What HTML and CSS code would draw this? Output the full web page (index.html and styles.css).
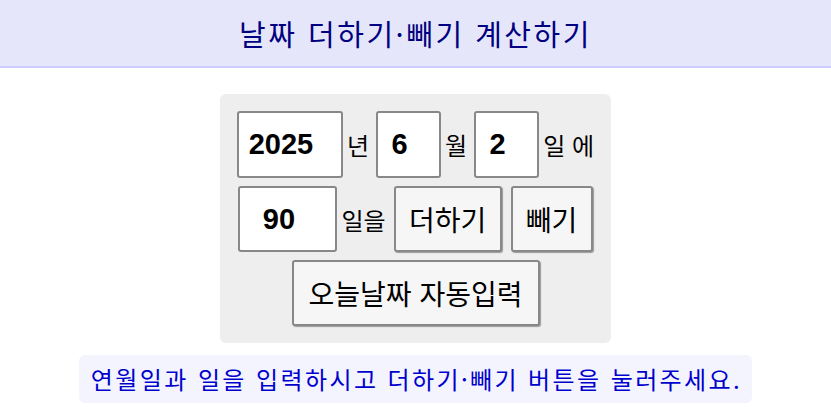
FILE: index.html
```html
<!DOCTYPE html>
<html lang="ko">
  <head>
    <meta charset="UTF-8" />
    <meta name="viewport" content="width=device-width, initial-scale=1.0" />
    <title>날짜 더하기·빼기 계산하기</title>
    <link rel="stylesheet" href="styles.css">
  </head>
  <body>
    <div class="header">날짜 더하기·빼기 계산하기</div>

    <div class="panel">
      <div class="row">
        <input class="num year" id="year" value="2025" />
        <span class="unit">년</span>
        <input class="num small" id="month" value="6" />
        <span class="unit">월</span>
        <input class="num small" id="day" value="2" />
        <span class="unit">일 에</span>
      </div>
      <div class="row">
        <input class="num days" id="days" value="90" />
        <span class="unit">일을</span>
        <button class="btn add" onclick="calc(1)">더하기</button>
        <button class="btn sub" onclick="calc(-1)">빼기</button>
      </div>
      <div class="row">
        <button class="btn today" onclick="setToday()">오늘날짜 자동입력</button>
      </div>
    </div>

    <div class="result" id="result">연월일과 일을 입력하시고 더하기·빼기 버튼을 눌러주세요.</div>

    <script>
      function setToday() {
        const d = new Date();
        document.getElementById("year").value = d.getFullYear();
        document.getElementById("month").value = d.getMonth() + 1;
        document.getElementById("day").value = d.getDate();
      }

      function calc(sign) {
        const y = parseInt(document.getElementById("year").value);
        const m = parseInt(document.getElementById("month").value);
        const d = parseInt(document.getElementById("day").value);
        const n = parseInt(document.getElementById("days").value);
        const result = document.getElementById("result");
        if (isNaN(y) || isNaN(m) || isNaN(d) || isNaN(n)) {
          result.innerText = "숫자를 바르게 입력해 주세요.";
          return;
        }
        const date = new Date(y, m - 1, d);
        date.setDate(date.getDate() + sign * n);
        result.innerText =
          date.getFullYear() + "년 " + (date.getMonth() + 1) + "월 " + date.getDate() + "일 입니다.";
      }
    </script>
  </body>
</html>
```

FILE: styles.css
```css
body {
  margin: 0;
  font-family: "Noto Sans CJK KR", "Liberation Sans", sans-serif;
  background: #fff;
}
.header {
  height: 66px;
  line-height: 66px;
  text-align: center;
  font-size: 29px;
  letter-spacing: 2.5px;
  color: #000080;
  background: #e6e6fa;
  border-bottom: 2px solid #ccccff;
}
.panel {
  width: 357px;
  margin: 26px auto 0;
  padding: 17px;
  background: #eeeeee;
  border-radius: 6px;
  display: flex;
  flex-direction: column;
  gap: 8px;
}
.row {
  display: flex;
  justify-content: center;
  align-items: center;
  gap: 4px;
}
.row > * {
  flex-shrink: 0;
}
.unit {
  font-size: 24px;
  white-space: nowrap;
  color: #000;
}
.num {
  box-sizing: border-box;
  height: 67px;
  padding: 0 18px 0 0;
  font-family: "Liberation Sans", sans-serif;
  font-size: 29px;
  font-weight: bold;
  text-align: center;
  color: #000;
  background: #fff;
  border: 2px solid #888;
  border-radius: 3px;
}
.year {
  width: 106px;
}
.small {
  width: 65px;
  margin-left: 3px;
}
.days {
  width: 99px;
  height: 66px;
}
.btn {
  box-sizing: border-box;
  height: 66px;
  padding: 0;
  font-family: "Noto Sans CJK KR", "Liberation Sans", sans-serif;
  font-size: 28px;
  white-space: nowrap;
  color: #000;
  background: #f6f6f6;
  border: 2px solid #888;
  border-radius: 3px;
  box-shadow: 1px 1px 1px #999;
  cursor: pointer;
}
.add {
  width: 108px;
  margin-left: 4px;
}
.sub {
  width: 82px;
  margin-left: 5px;
}
.today {
  width: 248px;
}
.result {
  width: fit-content;
  margin: 12px auto 0;
  padding: 0 10px 0 12px;
  height: 48px;
  line-height: 48px;
  font-size: 24px;
  letter-spacing: 2.4px;
  color: #0000cd;
  background: #f4f4ff;
  border-radius: 6px;
}
```
